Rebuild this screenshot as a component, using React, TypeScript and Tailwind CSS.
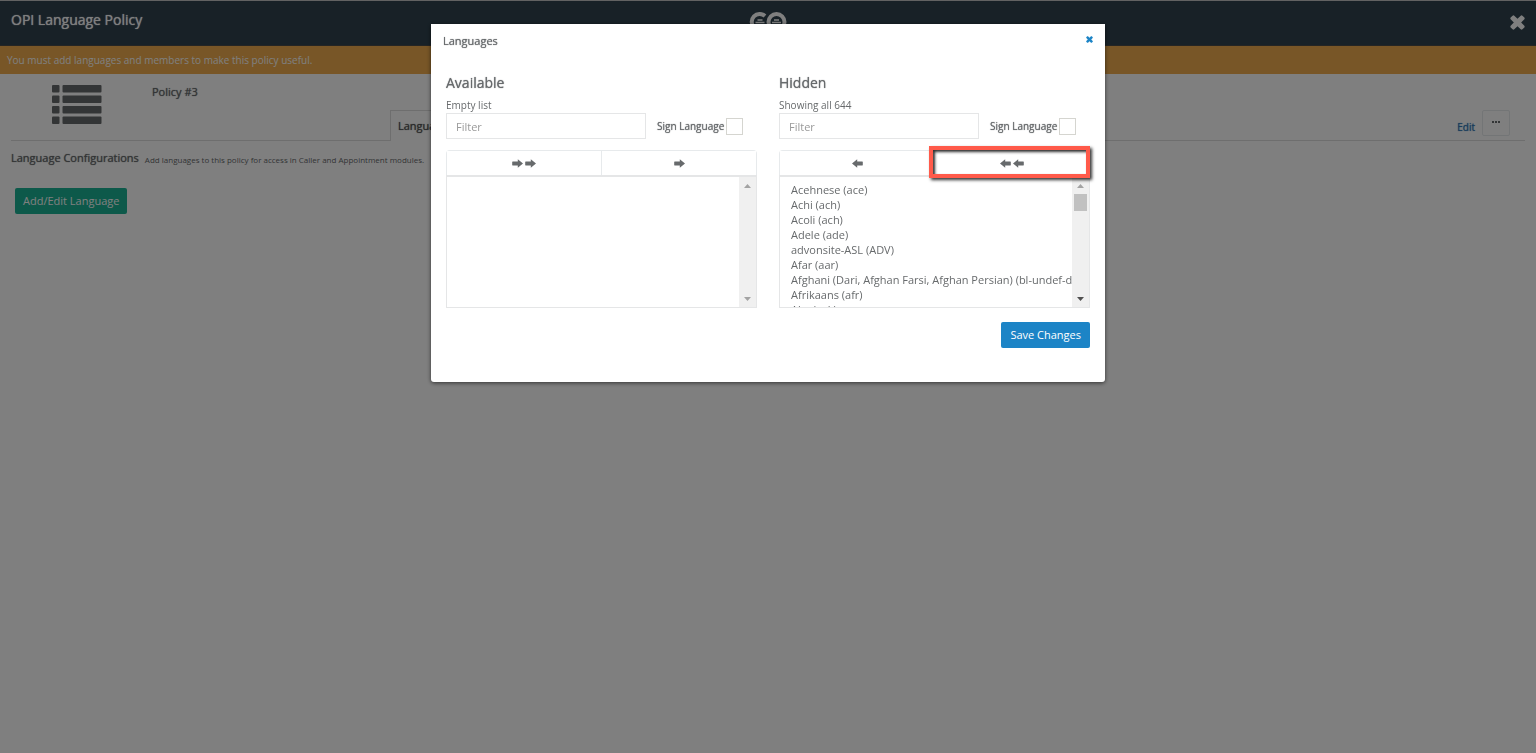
import { useState } from "react";
import type { ReactNode } from "react";

const availableLanguages: string[] = [];

const hiddenLanguages = [
    "Acehnese (ace)",
    "Achi (ach)",
    "Acoli (ach)",
    "Adele (ade)",
    "advonsite-ASL (ADV)",
    "Afar (aar)",
    "Afghani (Dari, Afghan Farsi, Afghan Persian) (bl-undef-dup)",
    "Afrikaans (afr)",
    "Aka (axk)",
    "Akan (aka)",
];

function ArrowIcon({ left = false }: { left?: boolean }) {
    return (
        <svg width="11" height="9" viewBox="0 0 11 9" fill="currentColor" aria-hidden="true">
            {left ? (
                <path d="M0 4.5 5.2 0.3V2.6H10.4Q10.8 2.6 10.8 3V6Q10.8 6.4 10.4 6.4H5.2V8.7Z" />
            ) : (
                <path d="M11 4.5 5.8 0.3V2.6H0.6Q0.2 2.6 0.2 3V6Q0.2 6.4 0.6 6.4H5.8V8.7Z" />
            )}
        </svg>
    );
}

function TimesIcon({ size }: { size: number }) {
    return (
        <svg width={size} height={size} viewBox="0 0 14 14" fill="currentColor" aria-hidden="true">
            <path d="M13.7 10.8q0 .4-.3.8l-1.8 1.8q-.4.3-.8.3t-.8-.3L7 10.4l-3 3q-.4.3-.8.3t-.8-.3L.6 11.6q-.3-.4-.3-.8t.3-.8l3-3-3-3q-.3-.4-.3-.8t.3-.8L2.4.6q.4-.3.8-.3t.8.3l3 3 3-3q.4-.3.8-.3t.8.3l1.8 1.8q.3.4.3.8t-.3.8l-3 3 3 3q.3.4.3.8z" />
        </svg>
    );
}

function ListIcon() {
    return (
        <svg width="50" height="40" viewBox="0 0 50 40" fill="currentColor" aria-hidden="true">
            {[0, 10.5, 21, 31.5].map((y) => (
                <g key={y}>
                    <rect x="0" y={y} width="7.5" height="7.5" rx="1" />
                    <rect x="10.5" y={y} width="39" height="7.5" rx="1" />
                </g>
            ))}
        </svg>
    );
}

function Logo() {
    return (
        <svg width="38" height="20" viewBox="0 0 38 20" fill="none" stroke="currentColor" aria-hidden="true">
            <path d="M16 5A8 8 0 1 0 16 17" strokeWidth="4" />
            <circle cx="27.5" cy="11" r="8" strokeWidth="4" />
            <path d="M8.5 9H13.5M6.5 11.5H15.5M25 9H30M23 11.5H32" strokeWidth="1.3" />
        </svg>
    );
}

function ScrollTrack({ active }: { active: boolean }) {
    return (
        <div className="flex w-[17px] shrink-0 flex-col items-center bg-[#f0f0f0]" aria-hidden="true">
            <svg width="17" height="17" viewBox="0 0 17 17" className="fill-[#a3a3a3]">
                <path d="M5 11H12L8.5 7Z" />
            </svg>
            {active && <div className="h-[17px] w-[13px] bg-[#c1c1c1]" />}
            <svg width="17" height="17" viewBox="0 0 17 17" className={active ? "mt-auto fill-[#505050]" : "mt-auto fill-[#a3a3a3]"}>
                <path d="M5 7H12L8.5 11Z" />
            </svg>
        </div>
    );
}

// regular weight thickened by a shadow
const strong = "[text-shadow:0_0_1px_currentColor]";

interface LanguageListProps {
    id: string;
    title: string;
    info: string;
    languages: string[];
    children: ReactNode;
}

function LanguageList({ id, title, info, languages, children }: LanguageListProps) {
    const [filter, setFilter] = useState("");
    const shown = languages.filter((l) => l.toLowerCase().includes(filter.toLowerCase()));

    return (
        <section className="min-w-0 flex-1">
            <h3 className={`text-[14px] leading-5 ${strong}`}>{title}</h3>
            <p className="mt-1 text-[10px] leading-4">{info}</p>
            <div className="flex items-center">
                <input
                    type="text"
                    aria-label={`Filter ${title}`}
                    placeholder="Filter"
                    value={filter}
                    onChange={(e) => setFilter(e.target.value)}
                    className="h-[26px] w-[200px] border border-[#e5e6e7] px-[9px] text-[11px] outline-none placeholder:text-[#9a9a9a]"
                />
                <label htmlFor={`${id}-sign`} className={`ml-[11px] text-[10px] ${strong}`}>
                    Sign Language
                </label>
                <input
                    id={`${id}-sign`}
                    type="checkbox"
                    className="ml-[2px] size-[17px] appearance-none border border-[#d5d5d0] bg-white checked:bg-[#1c84c6]"
                />
            </div>
            <div className="mt-[11px] flex h-[25px] rounded-t-sm border border-b-0 border-[#e7eaec]">{children}</div>
            <div className="flex h-[133px] border border-t-2 border-[#e5e6e7]">
                <select
                    multiple
                    aria-label={`${title} languages`}
                    className="min-w-0 flex-1 overflow-hidden pt-[5px] pl-[11px] text-[11px] outline-none [scrollbar-width:none]"
                >
                    {shown.map((l) => (
                        <option key={l} className="min-h-0 p-0 leading-[15px]">
                            {l}
                        </option>
                    ))}
                </select>
                <ScrollTrack active={languages.length > 0} />
            </div>
        </section>
    );
}

const moveButton = "flex flex-1 items-center justify-center gap-[2px] bg-white";

export default function App() {
    return (
        <div className="min-h-screen bg-white font-['Open_Sans','Noto_Sans',sans-serif] text-[11px] text-[#676a6c]">
            {/* Top bar */}
            <header className="flex h-[46px] items-start justify-between border-y border-[#c4c4c4] border-b-[#4a4a48] bg-[#30434f] px-[11px] text-white">
                <h1 className={`flex-1 pt-[9px] text-[14px] leading-5 ${strong}`}>OPI Language Policy</h1>
                <div className="pt-[10px]">
                    <Logo />
                </div>
                <div className="flex flex-1 justify-end pt-[14px]">
                    <button aria-label="Close policy">
                        <TimesIcon size={15} />
                    </button>
                </div>
            </header>
            <div className="h-7 bg-[#f0ad4e] px-[7px] text-[10px] leading-7 text-white">
                You must add languages and members to make this policy useful.
            </div>

            {/* Policy summary */}
            <main className="px-[11px]">
                <div className="flex h-[67px] items-end border-b border-[#dddddd]">
                    <div className="flex w-[379px] self-start pt-[11px]">
                        <div className="ml-[41px] w-[100px]">
                            <ListIcon />
                        </div>
                        <h2 className={`text-[11px] leading-[14px] ${strong}`}>Policy #3</h2>
                    </div>
                    <a
                        href="#languages"
                        className={`-mb-px h-[31px] border border-b-0 border-[#dddddd] bg-white px-[7px] leading-[29px] text-[#555555] ${strong}`}
                    >
                        Languages
                    </a>
                    <a href="#edit" className={`mb-[5px] ml-auto text-[10px] leading-4 text-[#337ab7] ${strong}`}>
                        Edit
                    </a>
                    <button
                        aria-label="More actions"
                        className="mr-[15px] mb-1 ml-[7px] flex h-[26px] w-7 items-center justify-center rounded-xs border border-[#e7eaec]"
                    >
                        <svg width="8" height="4" viewBox="0 0 8 4" fill="currentColor" aria-hidden="true">
                            <rect x="0" y="0" width="2" height="2" />
                            <rect x="3" y="0" width="2" height="2" />
                            <rect x="6" y="0" width="2" height="2" />
                        </svg>
                    </button>
                </div>
                <div className="mt-[9px] flex items-end gap-[6px]">
                    <h3 className={`text-[11px] leading-4 ${strong}`}>Language Configurations</h3>
                    <small className="text-[8px] leading-3">Add languages to this policy for access in Caller and Appointment modules.</small>
                </div>
                <button className="mt-[22px] ml-1 h-[26px] rounded-xs bg-[#1ab394] px-2 text-[11px] text-white">Add/Edit Language</button>
            </main>

            {/* Languages dialog */}
            <div className="fixed inset-0 flex items-start justify-center bg-black/50 pt-6">
                <div
                    role="dialog"
                    aria-modal="true"
                    aria-labelledby="dialog-title"
                    className="w-[674px] rounded-b-[3px] bg-white px-[15px] pb-[34px] shadow-[0_1px_4px_rgba(0,0,0,0.6)]"
                >
                    <div className="-mx-1 flex items-center justify-between pt-[7px]">
                        <h2 id="dialog-title" className={`pl-px text-[11px] leading-5 ${strong}`}>
                            Languages
                        </h2>
                        <button aria-label="Close" className="mr-px pb-1 pl-2 text-[#1c84c6]">
                            <TimesIcon size={7} />
                        </button>
                    </div>
                    <div className="mt-[22px] flex gap-[22px]">
                        <LanguageList id="available" title="Available" info="Empty list" languages={availableLanguages}>
                            <button aria-label="Hide all" className={`${moveButton} border-r border-[#e7eaec]`}>
                                <ArrowIcon />
                                <ArrowIcon />
                            </button>
                            <button aria-label="Hide selected" className={moveButton}>
                                <ArrowIcon />
                            </button>
                        </LanguageList>
                        <LanguageList id="hidden" title="Hidden" info="Showing all 644" languages={hiddenLanguages}>
                            <button aria-label="Show selected" className={`${moveButton} border-r border-[#e7eaec]`}>
                                <ArrowIcon left />
                            </button>
                            <button aria-label="Show all" className={`${moveButton} relative`}>
                                <ArrowIcon left />
                                <ArrowIcon left />
                                <span className="absolute -top-[5px] -right-px -bottom-[3px] -left-[6px] border-4 border-[#ff5a4a] shadow-[2px_2px_3px_rgba(0,0,0,0.8),inset_2px_2px_3px_rgba(0,0,0,0.8)]" />
                            </button>
                        </LanguageList>
                    </div>
                    <div className="mt-[14px] flex justify-end">
                        <button className="h-[26px] rounded-xs bg-[#1c84c6] px-[9px] text-[11px] text-white">Save Changes</button>
                    </div>
                </div>
            </div>
        </div>
    );
}
